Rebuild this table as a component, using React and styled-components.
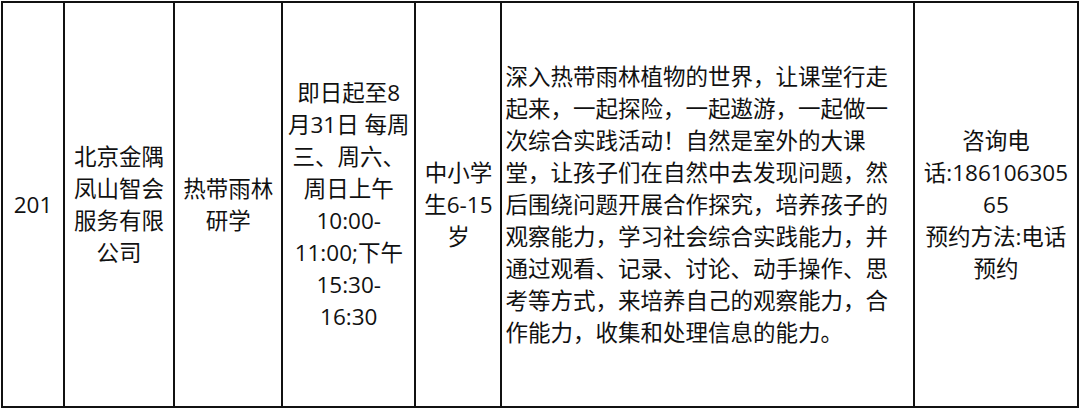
import React from "react";
import styled, { createGlobalStyle } from "styled-components";

const GlobalStyle = createGlobalStyle`
  html, body {
    margin: 0;
    padding: 0;
    background: #ffffff;
  }
  body {
    font-family: "Open Sans", "Noto Sans CJK SC", sans-serif;
    color: #111;
  }
`;

const Page = styled.div`
  width: 1080px;
  height: 410px;
  padding: 1px;
  box-sizing: border-box;
`;

const Table = styled.table`
  width: 1078px;
  height: 407px;
  border-collapse: collapse;
  table-layout: fixed;
  border: 2px solid #111;
`;

const Cell = styled.td`
  border: 2px solid #111;
  padding: 0 ${(p) => (p.$left ? "3px" : "0")};
  text-align: ${(p) => (p.$left ? "left" : "center")};
  vertical-align: middle;
  font-size: 22.5px;
  line-height: 32px;
  white-space: nowrap;
  color: #111;
`;

const widths = [62, 110, 108, 133, 86, 412, 164];

const lines = (arr) =>
  arr.map((t, i) => (
    <React.Fragment key={i}>
      {t}
      {i < arr.length - 1 && <br />}
    </React.Fragment>
  ));

export default function App() {
  return (
    <>
      <GlobalStyle />
      <Page>
        <Table>
          <colgroup>
            {widths.map((w, i) => (
              <col key={i} style={{ width: w }} />
            ))}
          </colgroup>
          <tbody>
            <tr>
              <Cell>201</Cell>
              <Cell>{lines(["北京金隅", "凤山智会", "服务有限", "公司"])}</Cell>
              <Cell>{lines(["热带雨林", "研学"])}</Cell>
              <Cell>
                {lines([
                  "即日起至8",
                  "月31日 每周",
                  "三、周六、",
                  "周日上午",
                  "10:00-",
                  "11:00;下午",
                  "15:30-",
                  "16:30",
                ])}
              </Cell>
              <Cell>{lines(["中小学", "生6-15", "岁"])}</Cell>
              <Cell $left>
                {lines([
                  "深入热带雨林植物的世界，让课堂行走",
                  "起来，一起探险，一起遨游，一起做一",
                  "次综合实践活动！自然是室外的大课",
                  "堂，让孩子们在自然中去发现问题，然",
                  "后围绕问题开展合作探究，培养孩子的",
                  "观察能力，学习社会综合实践能力，并",
                  "通过观看、记录、讨论、动手操作、思",
                  "考等方式，来培养自己的观察能力，合",
                  "作能力，收集和处理信息的能力。",
                ])}
              </Cell>
              <Cell>
                {lines(["咨询电", "话:186106305", "65", "预约方法:电话", "预约"])}
              </Cell>
            </tr>
          </tbody>
        </Table>
      </Page>
    </>
  );
}
